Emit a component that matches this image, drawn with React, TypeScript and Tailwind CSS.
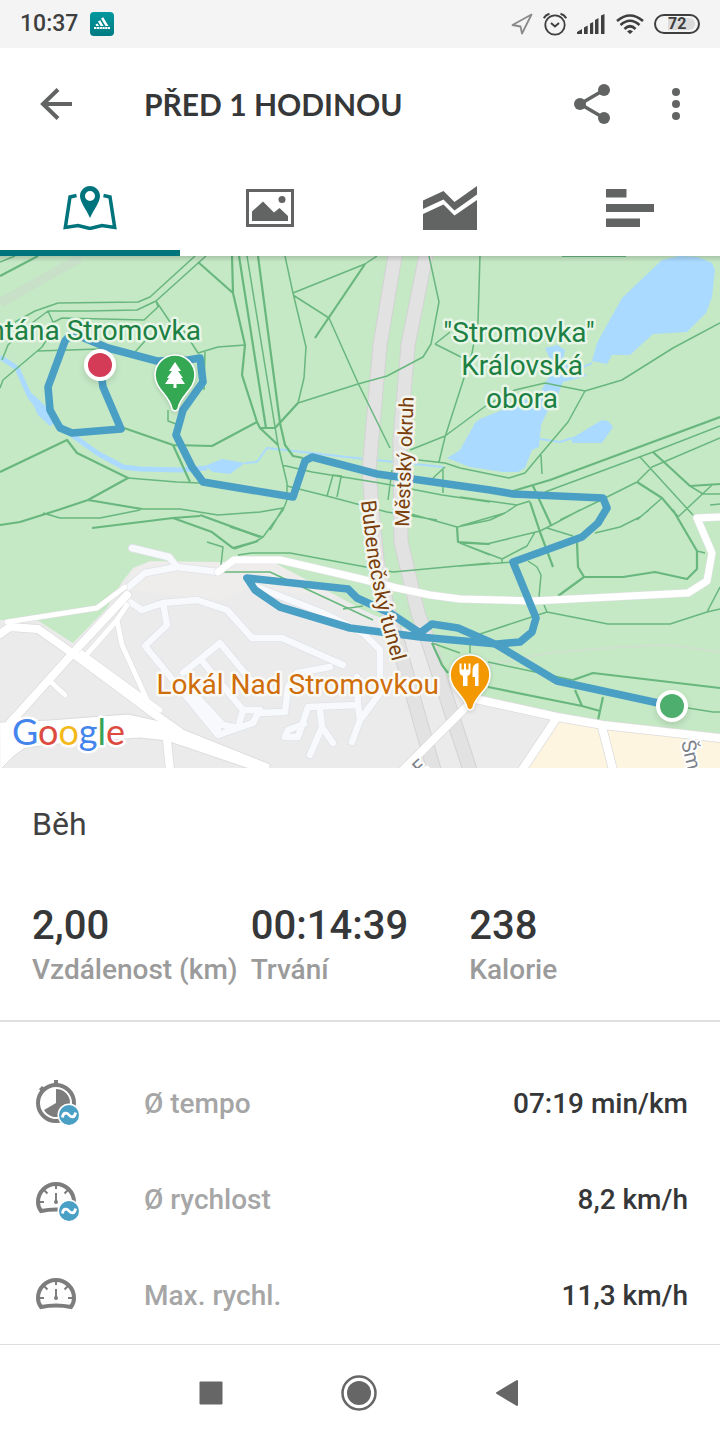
import React, { FunctionComponent, ReactNode } from 'react';

const StatusBar: FunctionComponent = () => (
  <div className="flex h-12 items-center justify-between bg-[#f4f4f4] px-5 text-[#3f3f3f]">
    <div className="flex items-center gap-3">
      <span className="text-[23px] font-medium">10:37</span>
      <svg className="h-6 w-6" viewBox="0 0 24 24" aria-hidden="true">
        <defs>
          <linearGradient id="badge" x1="0" y1="0" x2="0" y2="1">
            <stop offset="0" stopColor="#02999e" />
            <stop offset="1" stopColor="#007a82" />
          </linearGradient>
        </defs>
        <rect width="24" height="24" rx="4" fill="url(#badge)" />
        <path d="M11 6.500l2.200-1.200 5.300 8.700h-3zM8 9.500l2.200-1.200 3.400 5.700h-3zM5.500 12.500l2-1 1.500 2.500h-2.800z" fill="#fff" />
        <path d="M4 16h16" stroke="#fff" strokeWidth="2.200" strokeDasharray="2.300 .5" />
      </svg>
    </div>
    <div className="flex items-center">
      <svg className="mr-[10px] h-[22px] w-[22px]" viewBox="0 0 22 22" fill="none" stroke="#8a8a8a" strokeWidth="1.800" strokeLinejoin="round" aria-hidden="true">
        <path d="M20.500 1.500L1.500 12l8 1.500 1.500 7z" />
      </svg>
      <svg className="mr-[10px] h-6 w-6" viewBox="0 0 24 24" fill="none" stroke="currentColor" strokeWidth="1.800" aria-hidden="true">
        <circle cx="12" cy="13" r="9.700" />
        <path d="M.800 6.200Q2.500 2.800 6.500 1.700M23.200 6.200Q21.500 2.800 17.500 1.700" strokeWidth="2" />
        <path d="M8 11l4 3.500 4-3.500" strokeWidth="2" />
      </svg>
      <svg className="mr-[11px] h-5 w-7" viewBox="0 0 28 20" fill="currentColor" aria-hidden="true">
        <path d="M0 20v-2l5-3v5zM7 20v-6.500l3.700-2V20zM13 20V9.500l3.200-1.500v12zM18 20V6L21.500 4v16zM24 20V1.500L27.500 0v20z" />
      </svg>
      <svg className="mr-[10px] h-5 w-7" viewBox="0 0 28 20" fill="none" stroke="currentColor" strokeWidth="2.600" aria-hidden="true">
        <path d="M1 7Q14-4 27 7M4.500 11Q14 2.500 23.500 11M8.500 15Q14 9.500 19.500 15" />
        <path d="M14 20l-3-2.500Q14 14.500 17 17.500z" fill="currentColor" stroke="none" />
      </svg>
      <div className="flex h-5 w-[46px] items-center rounded-full border-2 border-current px-[3px]">
        <span className="ml-[9px] flex h-3 flex-1 items-center rounded-r-full bg-[#dcdcdc] text-base font-bold leading-none">
          72
        </span>
      </div>
    </div>
  </div>
);

const AppBar: FunctionComponent = () => (
  <header className="flex h-28 items-center pl-8 pr-5 text-[#626463]">
    <button type="button" aria-label="Zpět" className="mr-16 flex h-12 w-12 items-center justify-center">
      <svg className="h-8 w-8" viewBox="0 0 32 32" fill="none" stroke="currentColor" strokeWidth="4" aria-hidden="true">
        <path d="M32 16H3M18 1.500L3 16l15 14.500" />
      </svg>
    </button>
    <h1 className="flex-1 font-['Lato',sans-serif] text-[30px] font-bold text-[#363738]">PŘED 1 HODINOU</h1>
    <button type="button" aria-label="Sdílet" className="mr-9 flex h-12 w-12 items-center justify-center">
      <svg className="h-10 w-9" viewBox="0 0 36 40" aria-hidden="true">
        <path d="M30 6L6 20l24 14" fill="none" stroke="currentColor" strokeWidth="3.500" />
        <g fill="currentColor">
          <circle cx="30" cy="6" r="6" />
          <circle cx="6" cy="20" r="6" />
          <circle cx="30" cy="34" r="6" />
        </g>
      </svg>
    </button>
    <button type="button" aria-label="Další možnosti" className="flex h-12 w-12 items-center justify-center">
      <svg className="h-8 w-2" viewBox="0 0 8 32" fill="currentColor" aria-hidden="true">
        <circle cx="4" cy="4" r="4" />
        <circle cx="4" cy="16" r="4" />
        <circle cx="4" cy="28" r="4" />
      </svg>
    </button>
  </header>
);

const MapIcon = (
  <svg className="h-11 w-[54px]" viewBox="0 0 54 44" aria-hidden="true">
    <path d="M13.500 9.500L7 11 2.300 41.500 15 39.500l12 3 12-3 12.700 2L47 11l-6.500-1.500" fill="none" stroke="currentColor" strokeWidth="3.500" />
    <path fillRule="evenodd" d="M27 0C21.500 0 17 4.500 17 10c0 6 6 13 10 22 4-9 10-16 10-22 0-5.500-4.500-10-10-10zm0 5a5 5 0 110 10 5 5 0 010-10z" fill="currentColor" />
  </svg>
);

const PhotoIcon = (
  <svg className="h-[38px] w-12" viewBox="0 0 48 38" aria-hidden="true">
    <rect x="1.500" y="1.500" width="45" height="35" fill="none" stroke="currentColor" strokeWidth="3" />
    <path d="M6 32V22.500L17 12.500l11 11 5.500-4.500 8.500 8v5z" fill="currentColor" />
    <circle cx="36" cy="10.500" r="3.500" fill="currentColor" />
  </svg>
);

const ChartIcon = (
  <svg className="h-11 w-[54px]" viewBox="0 0 54 44" fill="currentColor" aria-hidden="true">
    <path d="M0 14.500L20.500 5 31.500 16 54 0v8.500L31.500 24.500 20.500 13.500 0 23z" />
    <path d="M0 28l20.500-9.500L31.500 29.500 54 14v30H0z" />
  </svg>
);

const BarsIcon = (
  <svg className="h-[38px] w-12" viewBox="0 0 48 38" fill="currentColor" aria-hidden="true">
    <path d="M0 0h20.500v8.500H0zM0 15h48v8H0zM0 29.500h34V38H0z" />
  </svg>
);

const tabs = [
  { label: 'Mapa', icon: MapIcon },
  { label: 'Fotky', icon: PhotoIcon },
  { label: 'Grafy', icon: ChartIcon },
  { label: 'Mezičasy', icon: BarsIcon },
];

const Tabs: FunctionComponent = () => (
  <nav className="grid h-24 grid-cols-4">
    {tabs.map(({ label, icon }, index) => (
      <button
        key={label}
        type="button"
        aria-label={label}
        className={
          index === 0
            ? 'flex items-center justify-center border-y-[6px] border-t-transparent border-b-[#00747c] text-[#00747c]'
            : 'flex items-center justify-center text-[#626463]'
        }
      >
        {icon}
      </button>
    ))}
  </nav>
);

// Map coordinates are screen pixels, the map starts at y = 256.
const footpaths = `
M0 262L15 256M195 256L150 297 138 302 58 303 35 311 15 322M206 256L156 301 137 310 87 311 48 311 28 326 8 345 2 360
M156 301L158 307 144 320 62 318 50 324M156 301L172 325M48 311L53 322M285 256L293 293 306 347 304 378 298 403 280 423
M293 293L365 264 377 256M293 295L329 318 358 383 390 448M298 403L358 384 387 376 423 357 431 344 439 302 429 256
M435 344L463 358M435 344L450 332M480 256L478 322 472 353 445 437 439 462M410 450L445 436 487 405 515 390 545 383 585 391 622 380 673 348 720 323
M585 391L568 422 540 455 525 473 509 478 460 468 445 463 410 459M541 455L542 474M545 492L653 452 720 426
M597 502L637 482 652 467 720 438M560 520L597 502M640 457L693 515M662 498L637 520M690 486L703 494H720M712 485L678 517
M460 497L517 505 530 501M517 505L505 513 460 526M580 510L552 525 540 531 487 544 460 543 502 559 527 546 535 532M460 566L512 562
M502 559V563M528 561L537 567 541 575 539 597M547 528L573 536M595 533L620 527 640 517 649 510
M477 635L547 612 608 624H670L707 612 720 609M707 612L720 587M544 605L547 612M488 662L573 680M688 708L713 712H720M470 643V653
M220 572H270L373 620M343 609L363 606M238 555L252 553H290L393 572 490 563M432 643L460 653M230 527L263 537 283 510 287 500M263 537L255 542 234 549
M397 510L457 527 490 520 505 513M460 543L490 555M43 513L60 518H100L140 510M0 388L3 380 42 347 53 330M37 351L100 349M135 352L145 341
M245 345L218 347 198 353 180 325M205 352L204 390M168 410V421L176 424M247 256L278 445 287 483V500
M282 465L312 472 380 483 442 495 490 502M287 486L327 496 387 512 437 520M392 470L388 500M443 470V493M445 467L433 478
M333 475L327 496M341 477L337 497M332 475L342 476
M207 542L223 547 221 565M128 478L177 482 200 483M142 509H180L218 515 260 512 283 508 270 530M720 504L710 505M697 551L705 553`;

const mainPaths = `
M0 276L38 256M198 262L233 293M232 256L233 293 245 345 242 375 257 422 260 428 278 445M239 256L266 428M260 428H275L298 403
M258 256L280 423 285 445 293 456 303 458M365 264L315 338M513 491L550 480 720 417M653 452L690 486 720 484M637 482L662 498 678 517
M673 510L697 551V569L687 579 655 572 623 577H584L578 567 577 542M584 577L558 596M533 486L551 525M530 502L540 532 553 567
M573 680L593 673 720 688M488 687L582 706 600 711M575 690L582 706M603 697L598 720M432 643L442 665 448 673
M0 525L20 522 58 510 88 500 128 478 77 453 67 440 0 472M88 500L142 509M92 528L173 518 200 516M173 518L212 532 233 548 258 541
M200 515L260 537M124 428L173 445 212 446 257 422M173 445L190 482M457 527L458 542 490 544M562 256H626`;

const paleRoads = `
M132 548L169 557 177 567M125 590L145 573 177 567 218 572M127 600L142 610 163 603 197 600 227 610 252 638H282L343 665
M163 603L167 625 145 646 218 735 238 728 223 725 200 700M183 673L220 643 253 683M203 662L243 710 238 728 253 723 258 713 285 712 288 687 297 673 330 667
M243 710H260M285 737L298 737 308 707 358 705 357 677M285 737L288 730 304 724M320 710L322 727 310 755M322 727L333 743M352 742L360 720 358 705
M360 720L380 693V650L363 633 323 613 257 587M190 690L218 729`;

const whiteRoads = `
M0 634L10 627 38 629 75 655 153 713 180 732M127 595L73 653 10 723M470 703L403 770M470 698L480 700 557 717 603 725 720 738
M556 719L522 770M602 727L613 770M167 740L170 770`;

const smallRoads = `M7 622L97 608 125 587M117 620L88 653M127 605L117 620 122 645 148 702M82 653L160 710M52 683L65 695`;

const parkRoad = `M218 572L234 560H280L357 578 397 588 430 595 460 599 533 601 688 593 707 581 712 553 697 518 720 517`;

const route = `
M100 365L103 387 121 429 72 433 60 428 50 410 48 387 65 341 72 333 108 348 157 361 188 360 200 358 203 382 183 410 176 435 192 467 203 482
L293 497 305 461 312 457 377 474 490 490 513 494 603 498 607 508 598 523 582 537 513 562 536 618 532 632 520 642 497 644 420 637 350 628
L280 607 255 590 247 578 348 589 357 598 390 613 420 633 432 624 458 628 497 645 557 681 672 706`;

const highways = `M396 250L380 345 369 470 372 510 377 560 388 610 398 643 434 770M427 250L408 345 400 440 401 542 418 613 430 647 470 770`;

const ActivityMap: FunctionComponent = () => (
  <section className="relative" aria-label="Mapa trasy">
    <svg
      className="block w-full font-['Roboto',sans-serif]"
      viewBox="0 256 720 512"
      preserveAspectRatio="xMidYMid slice"
      strokeLinejoin="round"
      fill="none"
    >
      <rect y="256" width="720" height="512" fill="#c5e8c5" />
      <path d="M0 303L80 258" stroke="#c8dfc8" strokeWidth="9" />
      {/* built-up area */}
      <path d="M0 620H37L73 643 107 608 122 582 133 568 150 561 220 562 273 563 313 583 363 610 430 640 443 673 470 696 557 717 720 738V768H0z" fill="#ebebeb" />
      <path d="M133 570L150 562H273L340 598 250 588 218 600 127 590z" fill="#eeedeb" />
      <path d="M557 717L720 738V768H522z" fill="#fdf5df" />
      {/* ponds and the stream */}
      <g fill="#aadaff">
        <path d="M662 260L680 256 698 257 712 263 715 270 712 297 706 313 687 332 653 334 630 355H612L607 364 592 361 597 343 622 298z" />
        <path d="M545 348L557 345 565 350 563 360 577 367 587 376 563 382 557 397 548 410 541 425 539 447 532 450 525 468 518 472H503L470 467 447 458 460 450 475 423 480 419 507 408 540 393 547 380 555 370z" />
        <path d="M572 438L602 420 608 421 613 427 602 443H572z" />
        <path d="M205 466L222 459 245 463 230 474 213 472z" />
        <path d="M27 390L35 396 60 420 50 426 38 415z" />
      </g>
      <path d="M0 357L17 368 30 397 43 413 58 424 75 437 97 453 123 467 140 469 180 470 207 468" stroke="#aadaff" strokeWidth="5" />
      <path d="M245 463L257 462 267 448 347 457 443 467M540 439L560 442 572 438M592 363L583 367" stroke="#aadaff" strokeWidth="2" />
      <path d="M488 665L548 653 620 647 668 645 720 652" stroke="#cfe0cf" strokeWidth="2" />

      <path d={highways} stroke="#d3d3d3" strokeWidth="15" />
      <path d={highways} stroke="#e2e2e2" strokeWidth="13" />
      <path d={footpaths} stroke="#68b77e" strokeWidth="1.500" />
      <path d={mainPaths} stroke="#68b77e" strokeWidth="2.200" />

      <g strokeLinecap="round">
        <path d={paleRoads} stroke="#dfe2e7" strokeWidth="8" />
        <path d={paleRoads} stroke="#f7f9fc" strokeWidth="6.500" />
        <path d={whiteRoads} stroke="#dcdcdc" strokeWidth="9.500" />
        <path d={smallRoads} stroke="#dcdcdc" strokeWidth="6" />
        <path d="M0 722L50 720 128 714 155 720 180 728 270 764V776L167 741 140 738 75 742 25 748 14 756 0 770z" fill="#fff" stroke="#dcdcdc" strokeWidth="1" />
        <path d={smallRoads} stroke="#fff" strokeWidth="5" />
        <path d={whiteRoads} stroke="#fff" strokeWidth="8" />
        <path d={parkRoad} stroke="#e3e3e8" strokeWidth="8" />
        <path d={parkRoad} stroke="#fff" strokeWidth="7" />
      </g>
      <path d={route} stroke="#4a9fc5" strokeWidth="7.600" strokeLinecap="round" />

      {/* street names */}
      <path id="tunnel" d="M361 501L368 560 377 606 396 675" />
      <g fill="#7a3f0c" stroke="#f4f4ee" strokeWidth="5" paintOrder="stroke">
        <text fontSize="21">
          <textPath href="#tunnel">Bubenečský tunel</textPath>
        </text>
        <text fontSize="20" transform="translate(409 527) rotate(-88)">
          Městský okruh
        </text>
      </g>
      <g fontSize="20" fill="#7d8288" stroke="#fff" strokeWidth="4" paintOrder="stroke">
        <text transform="translate(681 742) rotate(76)">Šm</text>
        <text transform="translate(420 776) rotate(-42)">E</text>
      </g>

      {/* places */}
      <g fontSize="28" stroke="#e8f6e8" strokeWidth="5" paintOrder="stroke" fill="#1c8043">
        <text x="201" y="340" textAnchor="end">ntána Stromovka</text>
        <g textAnchor="middle">
          <text x="519" y="342">"Stromovka"</text>
          <text x="522" y="375">Královská</text>
          <text x="522" y="408">obora</text>
        </g>
      </g>
      <text x="439" y="694" textAnchor="end" fontSize="28" fill="#cf6d09" stroke="#fbfaf6" strokeWidth="5" paintOrder="stroke">
        Lokál Nad Stromovkou
      </text>

      <g className="drop-shadow-sm">
        <path d="M175 355c-11 0-20 9-20 20 0 15 15 20 17 34q3 4 6 0c2-14 17-19 17-34 0-11-9-20-20-20z" fill="#35a853" stroke="#fff" strokeWidth="1.600" />
        <path d="M175 362l6 9h-3l5 7h-2l4 6h-8.500v4h-3v-4H165l4-6h-2l5-7h-3z" fill="#fff" />
        <path d="M470 655c-11 0-20 9-20 20 0 15 15 20 17 33q3 4 6 0c2-13 17-18 17-33 0-11-9-20-20-20z" fill="#f39800" stroke="#fff" strokeWidth="1.600" />
        <path d="M459.500 663.500h2v6h2.500v-6h2v6h2.500v-6h2v8q0 3.500-3 4.500v10h-4.500v-10q-3.500-1-3.500-4.500z" fill="#fff" />
        <path d="M478.500 686h-3.500v-9h-2.500v-7q0-6 6-7z" fill="#fff" />
      </g>
      <g className="drop-shadow-md" stroke="#fff" strokeWidth="4">
        <circle cx="100" cy="365" r="14" fill="#d33b56" />
        <circle cx="672" cy="706" r="14" fill="#4eae6d" />
      </g>

      <text x="12" y="745" fontSize="36" className="font-['Lato',sans-serif]" stroke="#fff" strokeWidth="5" paintOrder="stroke">
        <tspan fill="#4485ed">G</tspan>
        <tspan fill="#dd4b3e">o</tspan>
        <tspan fill="#f3b91a">o</tspan>
        <tspan fill="#4485ed">g</tspan>
        <tspan fill="#36a457">l</tspan>
        <tspan fill="#dd4b3e">e</tspan>
      </text>
    </svg>
    <div className="absolute inset-x-0 top-0 h-1.5 bg-linear-to-b from-black/15 to-transparent" />
  </section>
);

const stats = [
  { label: 'Vzdálenost (km)', value: '2,00' },
  { label: 'Trvání', value: '00:14:39' },
  { label: 'Kalorie', value: '238' },
];

const Summary: FunctionComponent = () => (
  <section className="border-b-2 border-[#e0e0e0] px-8 pb-[30px] pt-9">
    <h2 className="text-[32px] leading-10 text-[#414141]">Běh</h2>
    <dl className="mt-[58px] grid grid-cols-3">
      {stats.map(({ label, value }) => (
        <div key={label} className="flex flex-col-reverse font-medium">
          <dt className="whitespace-nowrap text-[28px] leading-10 text-[#9b9b9b]">{label}</dt>
          <dd className="text-[40px] leading-[48px] text-[#363738]">{value}</dd>
        </div>
      ))}
    </dl>
  </section>
);

const AverageBadge: FunctionComponent = () => (
  <>
    <circle cx="33" cy="35" r="11.500" fill="#fff" />
    <circle cx="33" cy="35" r="10" fill="#4a9fc5" />
    <path d="M26.500 37.500C27 32 31 32.500 33 35S39 38 39.500 32.500" fill="none" stroke="#fff" strokeWidth="2.800" />
  </>
);

const PaceIcon = (
  <svg className="h-12 w-11" viewBox="0 0 44 48" aria-hidden="true">
    <path d="M18 0h4v4h-4zM3 9l3-3 4 3-4 4z" fill="#7d7d7d" />
    <circle cx="20" cy="23" r="18" fill="none" stroke="#7d7d7d" strokeWidth="4" />
    <path d="M20 23V9a14 14 0 11-12 21z" fill="#7d7d7d" />
    <AverageBadge />
  </svg>
);

const Gauge: FunctionComponent = () => (
  <g fill="none" stroke="#7d7d7d">
    <path d="M5 31Q2 27 2 22a18 18 0 0136 0q0 5-3 9Q20 28 5 31z" strokeWidth="4" />
    <path d="M20 4v5M4 22h4M36 22h-4M8.500 10.500l3 3M31.500 10.500l-3 3M20 13v8" strokeWidth="2" />
    <circle cx="20" cy="22" r="2" fill="#7d7d7d" stroke="none" />
  </g>
);

const SpeedIcon = (
  <svg className="h-12 w-11" viewBox="0 0 44 48" aria-hidden="true">
    <g transform="translate(0 4)">
      <Gauge />
    </g>
    <AverageBadge />
  </svg>
);

const MaxSpeedIcon = (
  <svg className="h-12 w-11" viewBox="0 0 44 48" aria-hidden="true">
    <g transform="translate(0 4)">
      <Gauge />
    </g>
  </svg>
);

interface DetailRowProps {
  icon: ReactNode;
  label: string;
  value: string;
}

const DetailRow: FunctionComponent<DetailRowProps> = ({ icon, label, value }) => (
  <div className="flex h-24 items-center pl-9 pr-8 text-[28px] font-medium">
    <dt className="flex flex-1 items-center gap-16 text-[#a6a6a6]">
      {icon}
      {label}
    </dt>
    <dd className="text-[#363738]">{value}</dd>
  </div>
);

const SystemNav: FunctionComponent = () => (
  <nav className="mt-auto flex h-24 items-center justify-center gap-[100px] border-t border-[#dedede] pr-[2px] text-[#666]">
    <button type="button" aria-label="Poslední aplikace" className="flex h-12 w-12 items-center justify-center">
      <svg className="h-6 w-6" viewBox="0 0 24 24" fill="currentColor" aria-hidden="true">
        <rect x=".5" y=".5" width="23" height="23" rx="1" />
      </svg>
    </button>
    <button type="button" aria-label="Domů" className="flex h-12 w-12 items-center justify-center">
      <svg className="h-9 w-9" viewBox="0 0 36 36" aria-hidden="true">
        <circle cx="18" cy="18" r="16.500" fill="none" stroke="currentColor" strokeWidth="2.500" />
        <circle cx="18" cy="18" r="12" fill="currentColor" />
      </svg>
    </button>
    <button type="button" aria-label="Zpět" className="flex h-12 w-12 items-center justify-center">
      <svg className="h-7 w-6" viewBox="0 0 24 28" fill="currentColor" stroke="currentColor" strokeWidth="2" strokeLinejoin="round" aria-hidden="true">
        <path d="M22 2v24L2 14z" />
      </svg>
    </button>
  </nav>
);

const App: FunctionComponent = () => (
  <div className="flex min-h-screen flex-col bg-white font-['Roboto',sans-serif]">
    <StatusBar />
    <AppBar />
    <Tabs />
    <ActivityMap />
    <Summary />
    <dl className="pt-[34px]">
      <DetailRow icon={PaceIcon} label="Ø tempo" value="07:19 min/km" />
      <DetailRow icon={SpeedIcon} label="Ø rychlost" value="8,2 km/h" />
      <DetailRow icon={MaxSpeedIcon} label="Max. rychl." value="11,3 km/h" />
    </dl>
    <SystemNav />
  </div>
);

export default App;
